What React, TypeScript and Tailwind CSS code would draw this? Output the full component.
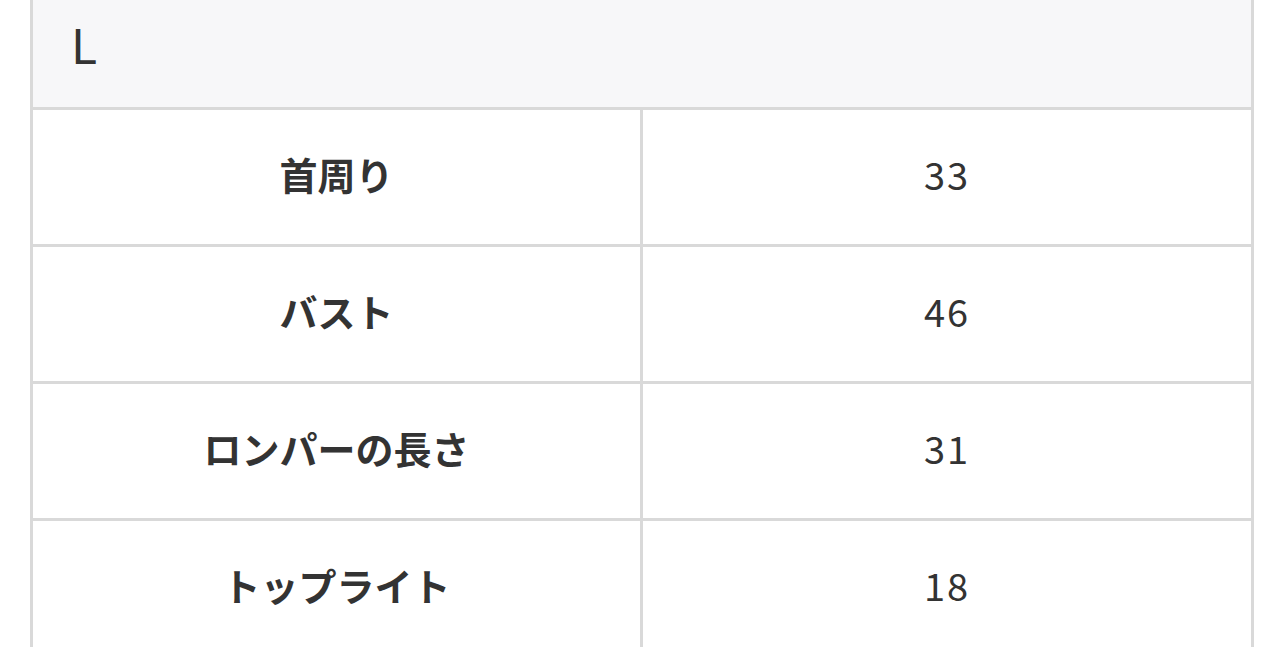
import React from 'react';

const rows = [
    { label: '首周り', value: '33' },
    { label: 'バスト', value: '46' },
    { label: 'ロンパーの長さ', value: '31' },
    { label: 'トップライト', value: '18' },
];

export default function App() {
    return (
        <div className="min-h-screen bg-white overflow-hidden" style={{ fontFamily: '"Noto Sans CJK JP", "Noto Sans", sans-serif' }}>
            <div className="mx-[30px] border-x-[3px] border-[#d9d9d9] text-[#333]">
                <div className="h-[110px] bg-[#f7f7f9] border-b-[3px] border-[#d9d9d9] pl-[38px] pt-[11px] text-[48px] leading-[64px] font-normal">
                    L
                </div>
                {rows.map((row) => (
                    <div key={row.label} className="grid grid-cols-[610px_1fr] h-[137px] border-b-[3px] border-[#d9d9d9]">
                        <div className="flex items-center justify-center pb-[8px] border-r-[3px] border-[#d9d9d9] text-[38px] font-bold">
                            {row.label}
                        </div>
                        <div className="flex items-center justify-center pb-[8px] text-[38px] tracking-[2px]">
                            {row.value}
                        </div>
                    </div>
                ))}
            </div>
        </div>
    );
}
